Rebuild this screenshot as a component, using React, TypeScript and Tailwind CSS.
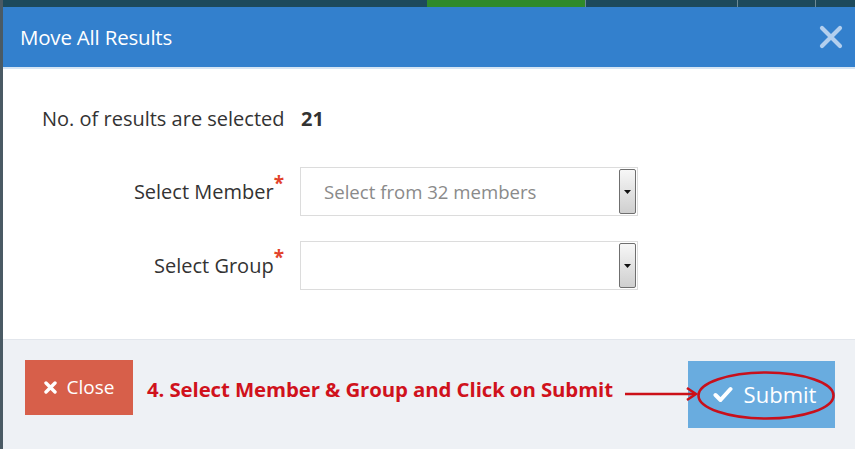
import React from "react";

const font = { fontFamily: '"Open Sans", "Liberation Sans", sans-serif' };

function SelectBox({ placeholder }: { placeholder?: string }) {
    return (
        <div className="w-[338px] h-[49px] border border-[#dcdcdc] bg-white flex items-center">
            <span className="flex-1 pl-[23px] text-[18.6px] text-[#8a8a8a] truncate">{placeholder}</span>
            {/* native-looking dropdown arrow */}
            <div className="w-[17px] h-[45px] mr-[1px] border border-[#6f6f6f] rounded-[2px] bg-gradient-to-b from-[#f7f7f7] to-[#cfcfcf] flex items-center justify-center">
                <svg width="7" height="4" viewBox="0 0 7 4">
                    <path d="M0 0 L7 0 L3.5 4 Z" fill="#111" />
                </svg>
            </div>
        </div>
    );
}

export default function App() {
    return (
        <div className="w-[855px] h-[449px] flex overflow-hidden bg-white" style={font}>
            {/* page edge behind modal */}
            <div className="w-[3px] shrink-0 bg-[#4a5a64]" />

            <div className="flex-1 flex flex-col min-w-0">
                {/* strip of page content behind the modal */}
                <div className="h-[7px] shrink-0 flex bg-[#1d4a5c]">
                    <div className="w-[424px]" />
                    <div className="w-[158px] bg-[#2f8a2a]" />
                    <div className="w-[1px] bg-[#6d8a96]" />
                    <div className="w-[151px]" />
                    <div className="w-[1px] bg-[#6d8a96]" />
                    <div className="w-[77px]" />
                    <div className="w-[1px] bg-[#6d8a96]" />
                    <div className="flex-1" />
                </div>

                {/* header */}
                <div className="h-[60px] shrink-0 bg-[#3380cd] flex items-center justify-between pl-[17px] pr-[12px]">
                    <h3 className="text-white text-[20.5px] leading-none tracking-[-0.2px]">Move All Results</h3>
                    <svg width="24" height="24" viewBox="0 0 24 24">
                        <path d="M3 3 L21 21 M21 3 L3 21" stroke="#b3cfee" strokeWidth="4.2" strokeLinecap="round" />
                    </svg>
                </div>
                <div className="h-[2px] shrink-0 bg-[#d6e5f4]" />

                {/* body */}
                <div className="flex-1 flex flex-col text-[#333]">
                    <div className="h-[53px] mt-[23px] flex items-center pl-[39px] text-[20px]">
                        <span className="w-[259px]">No. of results are selected</span>
                        <span className="font-bold">21</span>
                    </div>
                    <div className="mt-[22px] flex flex-col gap-[25px]">
                        <div className="flex items-center">
                            <label className="w-[282px] text-right text-[20px] pr-[1px]">
                                Select Member<sup className="text-[#e2432b] text-[19px] font-bold top-[-0.45em]">*</sup>
                            </label>
                            <div className="ml-[15px]">
                                <SelectBox placeholder="Select from 32 members" />
                            </div>
                        </div>
                        <div className="flex items-center">
                            <label className="w-[282px] text-right text-[20px] pr-[1px]">
                                Select Group<sup className="text-[#e2432b] text-[19px] font-bold top-[-0.45em]">*</sup>
                            </label>
                            <div className="ml-[15px]">
                                <SelectBox />
                            </div>
                        </div>
                    </div>
                </div>

                {/* footer */}
                <div className="h-[110px] shrink-0 bg-[#eef1f5] border-t border-[#e2e6ec] flex items-center pl-[22px] pr-[20px] pb-[12px]">
                    <button className="w-[108px] h-[55px] bg-[#d75f4a] text-white text-[19px] flex items-center justify-center gap-[10px] mb-[3px]">
                        <svg width="13" height="13" viewBox="0 0 13 13">
                            <path d="M2 2 L11 11 M11 2 L2 11" stroke="white" strokeWidth="3.4" strokeLinecap="round" />
                        </svg>
                        <span>Close</span>
                    </button>
                    <span className="ml-[14px] mt-[2px] text-[20.4px] font-bold text-[#d0121c] tracking-[-0.1px]">
                        4. Select Member &amp; Group and Click on Submit
                    </span>
                    {/* annotation arrow, head overlaps the submit button */}
                    <svg className="relative z-10 ml-[12px] mt-[10px] mr-[-9px] overflow-visible" width="72" height="14" viewBox="0 0 72 14">
                        <path d="M0 7 L70 7" stroke="#cc1018" strokeWidth="2.5" />
                        <path d="M62 1 L71 7 L62 13" stroke="#cc1018" strokeWidth="2.5" fill="none" />
                    </svg>
                    <div className="relative ml-auto mt-[12px]">
                        <button className="w-[147px] h-[67px] bg-[#69acdf] text-white text-[22px] flex items-center justify-center gap-[11px] pl-[6px]">
                            <svg width="20" height="17" viewBox="0 0 20 17">
                                <path d="M2.5 9 L7.5 14 L17.5 3" stroke="white" strokeWidth="4" strokeLinecap="round" strokeLinejoin="round" fill="none" />
                            </svg>
                            <span>Submit</span>
                        </button>
                        {/* annotation ring */}
                        <svg className="absolute left-[9px] top-[10px] overflow-visible" width="138" height="49" viewBox="0 0 138 49">
                            <ellipse cx="69" cy="24.5" rx="67.5" ry="23" stroke="#c8101c" strokeWidth="2.6" fill="none" />
                        </svg>
                    </div>
                </div>
            </div>
        </div>
    );
}
